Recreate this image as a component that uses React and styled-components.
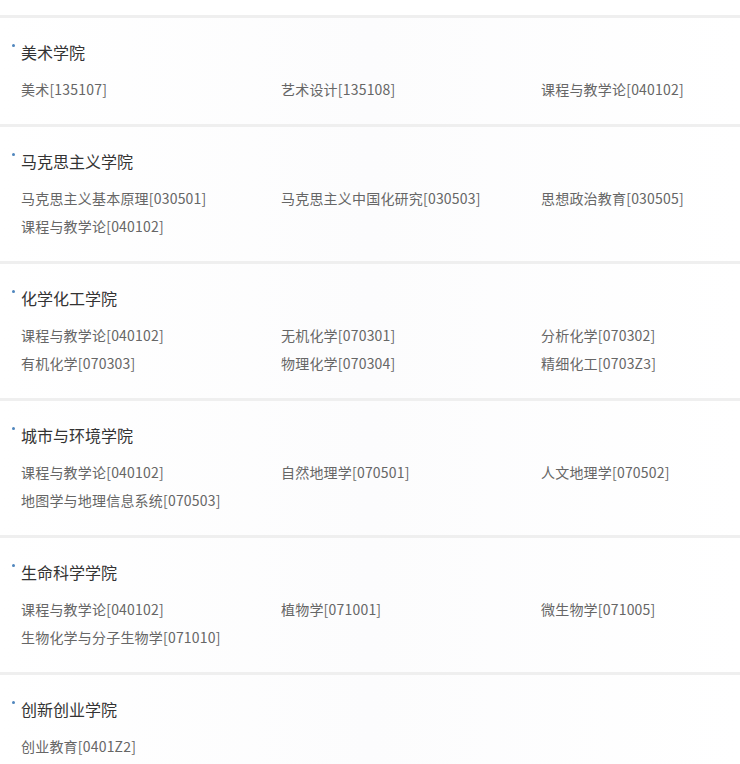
import React from "react";
import styled, { createGlobalStyle } from "styled-components";

const GlobalStyle = createGlobalStyle`
  html, body {
    margin: 0;
    padding: 0;
    background: #fff;
  }
  body {
    font-family: "Noto Sans CJK SC", "Noto Sans", "Liberation Sans", sans-serif;
  }
`;

const Page = styled.div`
  width: 740px;
  padding-top: 15px;
  background: #fff;
  overflow: hidden;
`;

const Section = styled.section`
  border-top: 3px solid #efefef;
  padding: 23px 0 21px 21px;
  background: linear-gradient(90deg, #fff 0%, #fcfcfd 50%, #fff 100%);
`;

const Title = styled.h3`
  position: relative;
  margin: 0 0 12px 0;
  font-size: 16px;
  font-weight: normal;
  line-height: 22px;
  color: #333;

  &::before {
    content: "";
    position: absolute;
    left: -9px;
    top: 3px;
    width: 3px;
    height: 3px;
    border-radius: 50%;
    background: #4f86bd;
  }
`;

const Grid = styled.div`
  display: grid;
  grid-template-columns: 260px 260px 1fr;
`;

const Item = styled.span`
  font-size: 14px;
  line-height: 28px;
  letter-spacing: 0.2px;
  color: #666;
  white-space: nowrap;
`;

const colleges = [
  { name: "美术学院", majors: ["美术[135107]", "艺术设计[135108]", "课程与教学论[040102]"] },
  {
    name: "马克思主义学院",
    majors: ["马克思主义基本原理[030501]", "马克思主义中国化研究[030503]", "思想政治教育[030505]", "课程与教学论[040102]"],
  },
  {
    name: "化学化工学院",
    majors: ["课程与教学论[040102]", "无机化学[070301]", "分析化学[070302]", "有机化学[070303]", "物理化学[070304]", "精细化工[0703Z3]"],
  },
  {
    name: "城市与环境学院",
    majors: ["课程与教学论[040102]", "自然地理学[070501]", "人文地理学[070502]", "地图学与地理信息系统[070503]"],
  },
  {
    name: "生命科学学院",
    majors: ["课程与教学论[040102]", "植物学[071001]", "微生物学[071005]", "生物化学与分子生物学[071010]"],
  },
  { name: "创新创业学院", majors: ["创业教育[0401Z2]"] },
];

const App = () => {
  return (
    <>
      <GlobalStyle />
      <Page>
        {colleges.map((c) => (
          <Section key={c.name}>
            <Title>{c.name}</Title>
            <Grid>
              {c.majors.map((m, i) => (
                <Item key={i}>{m}</Item>
              ))}
            </Grid>
          </Section>
        ))}
      </Page>
    </>
  );
};

export default App;
